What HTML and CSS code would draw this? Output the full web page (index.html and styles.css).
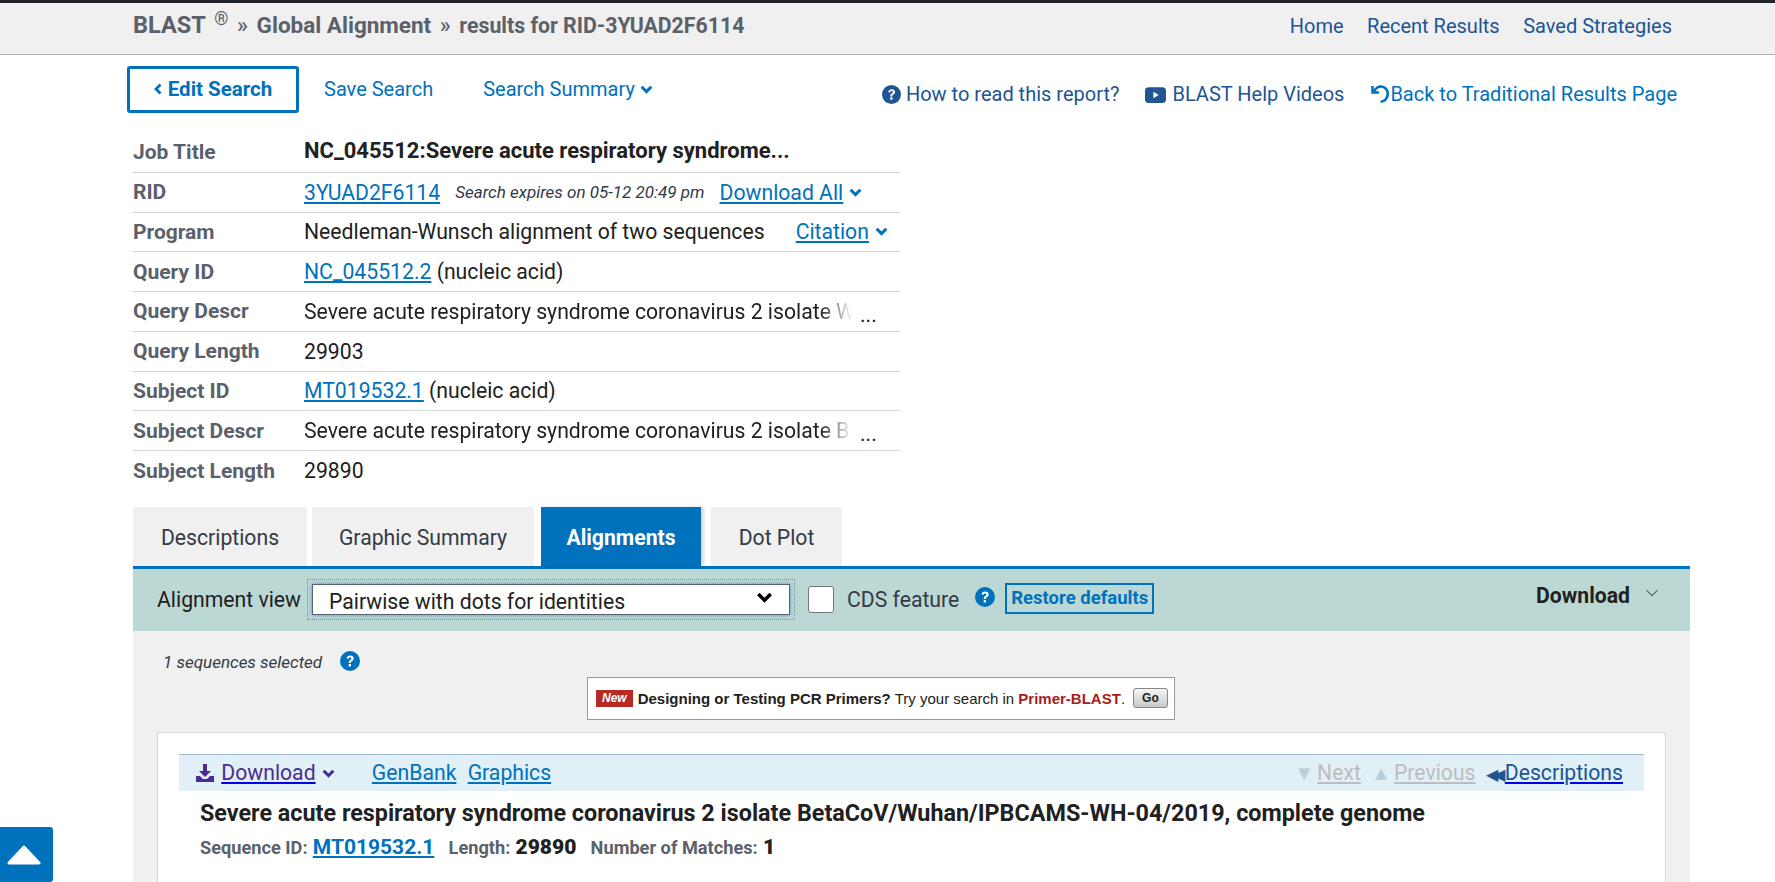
FILE: index.html
```html
<!DOCTYPE html>
<html lang="en">
<head>
<meta charset="UTF-8">
<meta name="viewport" content="width=device-width, initial-scale=1.0">
<title>Needleman-Wunsch Global Align Nucleotide Sequences</title>
<link rel="stylesheet" href="styles.css">
</head>
<body>
<svg class="icon-defs" width="0" height="0">
  <symbol id="chev" viewBox="0 0 12 8"><path d="M1.500 1.500 6 6l4.500-4.500" fill="none" stroke="currentColor" stroke-width="2.800"/></symbol>
  <symbol id="help" viewBox="0 0 20 20"><circle cx="10" cy="10" r="10" fill="currentColor"/><path d="M6.600 7.600C6.800 5.500 8.200 4.400 10.200 4.400c2.100 0 3.500 1.200 3.500 3 0 1.300-.7 2-1.700 2.700-.9.600-1.100 1-1.100 1.900H8.700c0-1.600.4-2.300 1.500-3 .8-.5 1.200-.9 1.200-1.500 0-.7-.5-1.100-1.300-1.100-.9 0-1.400.5-1.500 1.400z" fill="#fff"/><rect x="8.700" y="13" width="2.300" height="2.500" rx=".3" fill="#fff"/></symbol>
</svg>

<div class="topbar">
  <div class="crumbs"><span class="crumb-blast">BLAST</span> <sup class="reg">®</sup> <span class="crumb-sep">»</span> Global Alignment <span class="crumb-sep">»</span> <span class="crumb-small">results for RID-3YUAD2F6114</span></div>
  <nav class="topnav">
    <a href="#">Home</a>
    <a href="#">Recent Results</a>
    <a href="#">Saved Strategies</a>
  </nav>
</div>

<div class="actions">
  <div class="actions-left">
    <a class="edit-btn" href="#"><svg class="edit-chev" viewBox="0 0 8 12"><path d="M6.500 1.500 2 6l4.500 4.500" fill="none" stroke="currentColor" stroke-width="2.800"/></svg>Edit Search</a>
    <a class="plain-link save-link" href="#">Save Search</a>
    <a class="plain-link" href="#">Search Summary <svg class="chev"><use href="#chev"/></svg></a>
  </div>
  <div class="actions-right">
    <a class="help-link" href="#"><svg class="help-icon dark"><use href="#help"/></svg>How to read this report?</a>
    <a class="help-link" href="#"><svg class="yt-icon" viewBox="0 0 20 16"><rect width="20" height="15" y=".5" rx="3.500" fill="currentColor"/><path d="M8 4.800v6.400L13 8z" fill="#fff"/></svg>BLAST Help Videos</a>
    <a class="plain-link back-link" href="#"><svg class="undo-icon" viewBox="0 0 20 20"><path d="M2.500 2v6.500H9" fill="none" stroke="currentColor" stroke-width="2.600"/><path d="M4 7.500C6 3.500 9 2.500 11 2.500c4 0 6.700 3.400 6.700 7.500s-2.900 7.700-7.200 7.700" fill="none" stroke="currentColor" stroke-width="2.600"/></svg>Back to Traditional Results Page</a>
  </div>
</div>

<div class="summary">
  <div class="row"><div class="key">Job Title</div><div class="val job">NC_045512:Severe acute respiratory syndrome...</div></div>
  <div class="row"><div class="key">RID</div><div class="val"><a href="#">3YUAD2F6114</a><em class="expires">Search expires on 05-12 20:49 pm</em><a href="#">Download All</a><svg class="chev row-chev"><use href="#chev"/></svg></div></div>
  <div class="row"><div class="key">Program</div><div class="val">Needleman-Wunsch alignment of two sequences<a class="cite" href="#">Citation</a><svg class="chev row-chev"><use href="#chev"/></svg></div></div>
  <div class="row"><div class="key">Query ID</div><div class="val"><a href="#">NC_045512.2</a> (nucleic acid)</div></div>
  <div class="row"><div class="key">Query Descr</div><div class="val"><span class="fade-text">Severe acute respiratory syndrome coronavirus 2 isolate W</span><span class="more">...</span></div></div>
  <div class="row"><div class="key">Query Length</div><div class="val">29903</div></div>
  <div class="row"><div class="key">Subject ID</div><div class="val"><a href="#">MT019532.1</a> (nucleic acid)</div></div>
  <div class="row"><div class="key">Subject Descr</div><div class="val"><span class="fade-text">Severe acute respiratory syndrome coronavirus 2 isolate B</span><span class="more">...</span></div></div>
  <div class="row last"><div class="key">Subject Length</div><div class="val">29890</div></div>
</div>

<div class="tabs">
  <a class="tab tab-desc" href="#">Descriptions</a>
  <a class="tab tab-graphic" href="#">Graphic Summary</a>
  <a class="tab tab-active" href="#">Alignments</a>
  <a class="tab tab-dot" href="#">Dot Plot</a>
</div>

<div class="panel">
  <div class="toolbar">
    <span class="view-label">Alignment view</span>
    <div class="select-focus">
      <div class="fake-select">Pairwise with dots for identities<svg class="select-chev" viewBox="0 0 12 8"><path d="M1.500 1.500 6 6l4.500-4.500" fill="none" stroke="currentColor" stroke-width="2.600"/></svg></div>
    </div>
    <span class="checkbox"></span>
    <span class="cds">CDS feature</span>
    <svg class="help-icon cds-help"><use href="#help"/></svg>
    <a class="restore" href="#">Restore defaults</a>
    <div class="dl-wrap"><strong>Download</strong><svg class="dl-chev" viewBox="0 0 12 8"><path d="M1 1l5 5 5-5" fill="none" stroke="currentColor" stroke-width="1"/></svg></div>
  </div>

  <div class="selected-row"><em>1 sequences selected</em><svg class="help-icon sel-help"><use href="#help"/></svg></div>

  <div class="banner">
    <span class="new-tag">New</span>
    <span class="banner-text"><b>Designing or Testing PCR Primers?</b> Try your search in <b class="primer">Primer-BLAST</b>.</span>
    <span class="go-btn">Go</span>
  </div>

  <div class="card">
    <div class="card-bar">
      <div class="bar-left">
        <svg class="dl-icon" viewBox="0 0 20 20"><path d="M8 1h4v7h4l-6 6-6-6h4z" fill="currentColor"/><path d="M1 13h4l3 3h4l3-3h4v6H1z" fill="currentColor"/></svg>
        <a class="visited" href="#">Download</a><svg class="chev bar-chev"><use href="#chev"/></svg>
        <a class="gen" href="#">GenBank</a>
        <a href="#">Graphics</a>
      </div>
      <div class="bar-right">
        <span class="off-arrow">▼</span><a class="off" href="#">Next</a>
        <span class="off-arrow off-prev">▲</span><a class="off" href="#">Previous</a>
        <span class="back-arrow">◀◀</span><a class="desc-link" href="#">Descriptions</a>
      </div>
    </div>
    <h3 class="hit-title">Severe acute respiratory syndrome coronavirus 2 isolate BetaCoV/Wuhan/IPBCAMS-WH-04/2019, complete genome</h3>
    <div class="hit-meta">
      <span class="meta-key">Sequence ID:</span> <a class="meta-id" href="#">MT019532.1</a>
      <span class="meta-key meta-gap">Length:</span> <b>29890</b>
      <span class="meta-key meta-gap">Number of Matches:</span> <b>1</b>
    </div>
  </div>
</div>

<a class="to-top" href="#"><svg viewBox="0 0 34 20"><path d="M17 2 32 18H2z" fill="#fff" stroke="#fff" stroke-width="3" stroke-linejoin="round"/></svg></a>
</body>
</html>
```

FILE: styles.css
```css
html, body {
  height: 882px;
  overflow: hidden;
}

body {
  margin: 0;
  background: #fff;
  color: #212121;
  font-family: Roboto, "Liberation Sans", sans-serif;
  font-size: 21.200px;
}

a {
  color: #0071bc;
}

.icon-defs {
  position: absolute;
}

/* header */
.topbar {
  display: flex;
  justify-content: space-between;
  height: 51px;
  padding: 0 103px 0 133px;
  background: #f0f0f0;
  border-top: 3px solid #212529;
  border-bottom: 1px solid #aeb0b5;
}

.crumbs {
  padding-top: 9px;
  color: #5b616b;
  font-size: 22.500px;
  font-weight: 700;
  line-height: 26px;
}

.crumb-blast {
  font-size: 23.500px;
}

.crumb-small {
  font-size: 21.300px;
}

.crumb-sep {
  margin: 0 3px;
  font-weight: 500;
}

.reg {
  margin-left: 3px;
  font-size: 18px;
  font-weight: 400;
  line-height: 0;
}

.topnav {
  display: flex;
  gap: 23.500px;
  padding-top: 11px;
  font-size: 20px;
}

.topnav a {
  color: #205493;
  text-decoration: none;
}

/* action links */
.actions {
  display: flex;
  justify-content: space-between;
  height: 67px;
  padding: 11px 98px 0 127px;
  font-size: 20px;
}

.actions-left {
  display: flex;
  align-items: flex-start;
}

.actions-right {
  display: flex;
  gap: 26px;
  padding-top: 16px;
}

.edit-btn {
  display: flex;
  align-items: center;
  justify-content: center;
  width: 172px;
  height: 47px;
  box-sizing: border-box;
  padding-bottom: 2px;
  border: 3px solid #0071bc;
  border-radius: 3px;
  font-size: 20.500px;
  font-weight: 700;
  text-decoration: none;
}

.edit-chev {
  width: 8px;
  height: 12px;
  margin-right: 6px;
}

.plain-link {
  color: #0071bc;
  text-decoration: none;
  line-height: 47px;
}

.actions-left .plain-link {
  line-height: 47px;
}

.save-link {
  margin: 0 50px 0 25px;
}

.actions-right .plain-link,
.help-link {
  line-height: 24px;
}

.help-link {
  color: #205493;
  text-decoration: none;
}

.help-icon {
  display: inline-block;
  width: 19px;
  height: 19px;
  vertical-align: -3px;
  color: #0071bc;
}

.help-icon.dark {
  margin-right: 5px;
  color: #205493;
}

.yt-icon {
  width: 21px;
  height: 18px;
  margin-right: 6px;
  vertical-align: -3px;
}

.undo-icon {
  width: 20px;
  height: 20px;
  vertical-align: -3px;
}

.chev {
  display: inline-block;
  width: 13px;
  height: 9px;
  vertical-align: 2px;
  color: #0071bc;
}

/* job summary */
.summary {
  width: 767px;
  margin-left: 133px;
}

.row {
  display: grid;
  grid-template-columns: 171px 1fr;
  align-items: center;
  box-sizing: border-box;
  height: 39.750px;
  border-bottom: 1px solid #d6d7d9;
}

.row.last {
  border-bottom: 0;
}

.key {
  color: #5b616b;
  font-size: 21px;
  font-weight: 700;
}

.val {
  display: flex;
  align-items: center;
  white-space: pre;
}

.job {
  font-size: 22px;
  font-weight: 700;
  line-height: 24px;
  margin-top: -2px;
}

.expires {
  margin: 0 15px;
  font-size: 17px;
  color: #323a45;
}

.row-chev {
  margin-left: 6px;
}

.cite {
  margin-left: 31px;
}

.fade-text {
  display: block;
  width: 554px;
  overflow: hidden;
  -webkit-mask-image: linear-gradient(to right, #000 93%, transparent 99%);
  mask-image: linear-gradient(to right, #000 93%, transparent 99%);
}

.more {
  margin: 6px 0 0 2px;
}

/* tabs */
.tabs {
  display: flex;
  height: 59px;
  margin: 16px 0 0 133px;
}

.tab {
  display: flex;
  align-items: center;
  justify-content: center;
  box-sizing: border-box;
  padding-top: 2px;
  background: #f0f0f0;
  color: #323a45;
  text-decoration: none;
}

.tab-desc {
  width: 174px;
}

.tab-graphic {
  width: 222px;
  margin-left: 5px;
}

.tab-active {
  width: 160px;
  margin-left: 7px;
  background: #0071bc;
  color: #fff;
  font-weight: 700;
  box-shadow: 3px 0 3px rgba(0, 0, 0, .15);
}

.tab-dot {
  width: 131px;
  margin-left: 10px;
}

/* main panel */
.panel {
  height: 313px;
  overflow: hidden;
  margin: 0 85px 0 133px;
  background: #f0f0f0;
  border-top: 3px solid #0071bc;
}

.toolbar {
  display: flex;
  align-items: center;
  height: 62px;
  padding: 0 31px 0 24px;
  background: #bcd8d4;
}

.view-label {
  margin-right: 10px;
}

.select-focus {
  padding: 4px;
  margin-left: -4px;
  border: 1px dotted #7d8c8c;
}

.fake-select {
  display: flex;
  align-items: center;
  justify-content: space-between;
  box-sizing: border-box;
  width: 478px;
  height: 31px;
  padding: 4px 16px 0 16px;
  background: #fff;
  border: 1px solid #5b616b;
  box-shadow: 0 0 4px #4d9ac9;
}

.select-chev {
  width: 17px;
  height: 11px;
  margin-top: -8px;
  color: #000;
}

.checkbox {
  width: 26px;
  height: 27px;
  margin-left: 13px;
  box-sizing: border-box;
  background: #fff;
  border: 1px solid #757575;
  border-radius: 3px;
}

.cds {
  margin-left: 13px;
  color: #323a45;
}

.cds-help {
  width: 20px;
  height: 20px;
  margin: -6px 0 0 16px;
}

.restore {
  margin: -3px 0 0 10px;
  padding: 3px 4px;
  border: 2px solid #0071bc;
  font-size: 18.500px;
  font-weight: 700;
  text-decoration: none;
  line-height: 21px;
}

.dl-wrap {
  margin-left: auto;
  padding-bottom: 8px;
}

.dl-chev {
  width: 14px;
  height: 9px;
  margin-left: 15px;
  vertical-align: 5px;
  color: #5b616b;
}

.selected-row {
  padding: 18px 0 0 30px;
  height: 28px;
  font-size: 17px;
  line-height: 27px;
  color: #323a45;
}

.sel-help {
  width: 20px;
  height: 20px;
  margin-left: 18px;
}

.banner {
  display: flex;
  align-items: center;
  width: 588px;
  height: 43px;
  box-sizing: border-box;
  margin-left: 454px;
  padding: 0 8px;
  background: #fff;
  border: 1px solid #999;
  font-family: "Liberation Sans", sans-serif;
  font-size: 15px;
  white-space: nowrap;
}

.new-tag {
  padding: 0 6px;
  margin-right: 5px;
  background: #b52a22;
  color: #fff;
  font-size: 12px;
  font-style: italic;
  font-weight: 700;
  line-height: 17px;
}

.primer {
  color: #a51d1d;
}

.go-btn {
  margin-left: 8px;
  padding: 0 8px;
  background: linear-gradient(#f5f5f5, #c8c8c8);
  border: 1px solid #888;
  border-radius: 3px;
  font-size: 12px;
  font-weight: 700;
  line-height: 18px;
}

.card {
  height: 300px;
  margin: 12px 24px 0;
  padding: 21px 21px 0;
  background: #fff;
  border: 1px solid #d6d7d9;
}

.card-bar {
  display: flex;
  justify-content: space-between;
  align-items: center;
  height: 36px;
  padding: 0 21px 0 16px;
  background: #e1f0f7;
  border-top: 1px solid #9bb8d3;
}

.dl-icon {
  width: 20px;
  height: 20px;
  margin-right: 1px;
  vertical-align: -3px;
  color: #4c2c92;
}

.visited,
.bar-chev {
  color: #4c2c92;
}

.visited {
  text-decoration-color: #0000ee;
}

.bar-chev {
  margin-left: 6px;
}

.gen {
  margin: 0 6px 0 32px;
}

.off-arrow {
  color: #b8cfdc;
  font-size: 20px;
}

.off-prev {
  margin-left: 5px;
}

.off {
  margin-left: 3px;
  color: #bdbdbd;
}

.back-arrow {
  margin-left: 5px;
  color: #205493;
  font-size: 16px;
  letter-spacing: -5px;
}

.desc-link {
  margin-left: 5px;
  color: #205493;
  text-decoration-color: #0000ee;
}

.hit-title {
  margin: 9px 0 0 21px;
  font-size: 23.350px;
  font-weight: 700;
  line-height: 26px;
}

.hit-meta {
  margin: 9px 0 0 21px;
  font-size: 21px;
  font-weight: 700;
  line-height: 24px;
}

.meta-key {
  color: #5b616b;
  font-size: 18.200px;
}

.meta-gap {
  margin-left: 9px;
}

.meta-id {
  color: #0071bc;
}

/* back to top */
.to-top {
  position: fixed;
  left: 0;
  bottom: 0;
  display: flex;
  align-items: center;
  justify-content: center;
  box-sizing: border-box;
  width: 53px;
  height: 55px;
  padding-right: 6px;
  background: #0071bc;
  border-radius: 0 3px 3px 0;
}

.to-top svg {
  width: 34px;
  height: 20px;
}
```
